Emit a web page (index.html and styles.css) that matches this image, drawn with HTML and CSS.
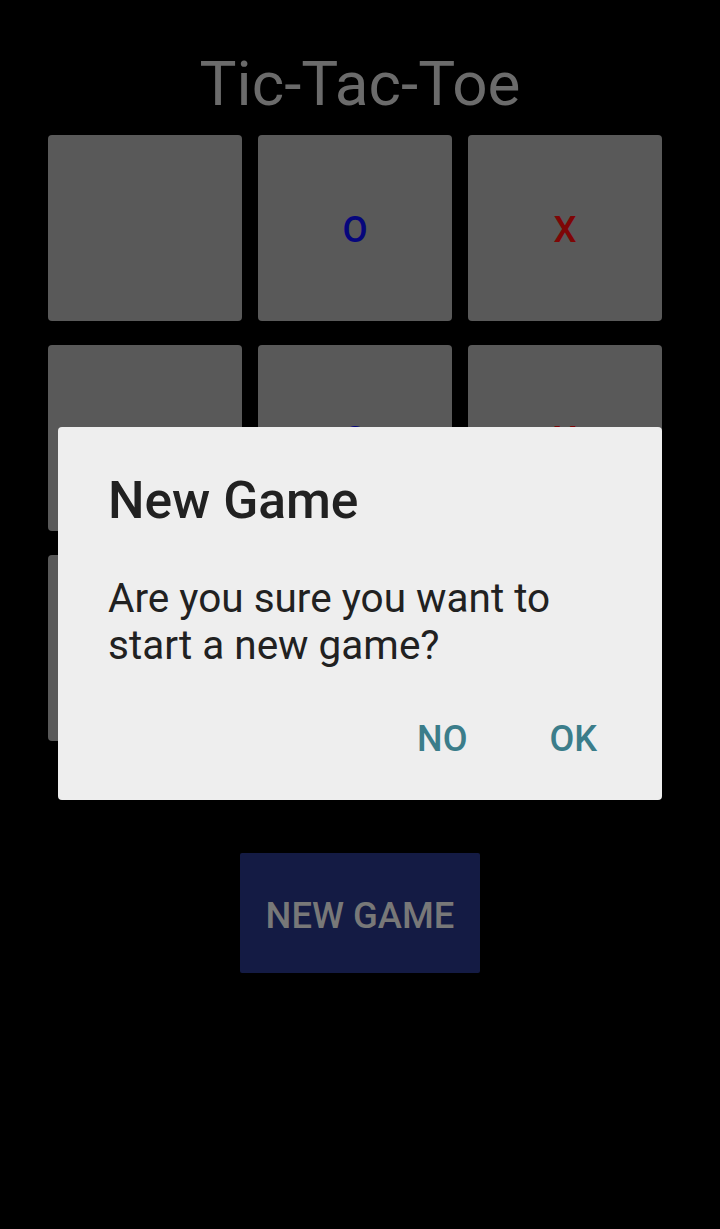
FILE: index.html
```html
<!DOCTYPE html>
<html>
<head>
<meta charset="utf-8">
<link rel="stylesheet" href="styles.css">
</head>
<body>
<div class="app">
  <h1 class="title">Tic-Tac-Toe</h1>
  <div class="board">
    <div class="cell"></div>
    <div class="cell o">O</div>
    <div class="cell x">X</div>
    <div class="cell"></div>
    <div class="cell o">O</div>
    <div class="cell x">X</div>
    <div class="cell"></div>
    <div class="cell"></div>
    <div class="cell"></div>
  </div>
  <div class="actions">
    <button class="new-game">NEW GAME</button>
  </div>
</div>
<div class="dialog">
  <h2 class="dialog-title">New Game</h2>
  <p class="dialog-body">Are you sure you want to start a new game?</p>
  <div class="dialog-buttons">
    <span class="dlg-btn">NO</span>
    <span class="dlg-btn">OK</span>
  </div>
</div>
</body>
</html>
```
FILE: styles.css
```css
html, body {
  margin: 0;
  padding: 0;
  background: #000;
  height: 100%;
}
body {
  font-family: Roboto, "Noto Sans", sans-serif;
  position: relative;
  width: 720px;
  height: 1229px;
  overflow: hidden;
}
.app {
  display: flex;
  flex-direction: column;
  align-items: center;
  padding-top: 49px;
}
.title {
  margin: 0;
  font-size: 62px;
  font-weight: 400;
  color: #6b6b6b;
  line-height: 70px;
  height: 86px;
}
.board {
  display: grid;
  grid-template-columns: repeat(3, 194px);
  grid-template-rows: repeat(3, 186px);
  column-gap: 16px;
  row-gap: 24px;
  margin-right: 10px;
}
.cell {
  background: #595959;
  border-radius: 4px;
  display: flex;
  align-items: center;
  justify-content: center;
  font-size: 36.5px;
  font-weight: 500;
  padding-top: 3px;
  box-sizing: border-box;
}
.cell.o { color: #06067c; }
.cell.x { color: #7e0606; }
.actions {
  margin-top: 112px;
}
.new-game {
  width: 240px;
  height: 120px;
  border: none;
  border-radius: 2px;
  background: #141b44;
  color: #787878;
  font-family: Roboto, sans-serif;
  font-size: 36.4px;
  font-weight: 500;
  padding: 5px 0 0 0;
}
.dialog {
  position: absolute;
  left: 58px;
  top: 427px;
  width: 604px;
  height: 373px;
  box-sizing: border-box;
  background: #eeeeee;
  border-radius: 4px;
  padding: 48px 50px 0 50px;
}
.dialog-title {
  margin: 0;
  font-size: 51.5px;
  font-weight: 500;
  color: #212121;
  line-height: 52px;
}
.dialog-body {
  margin: 48px 0 0 0;
  font-size: 40.5px;
  line-height: 47px;
  color: #212121;
}
.dialog-buttons {
  display: flex;
  justify-content: flex-end;
  gap: 82px;
  margin-top: 48px;
  padding-right: 15px;
}
.dlg-btn {
  font-size: 36px;
  font-weight: 500;
  color: #3b7d8a;
  line-height: 44px;
}
```
